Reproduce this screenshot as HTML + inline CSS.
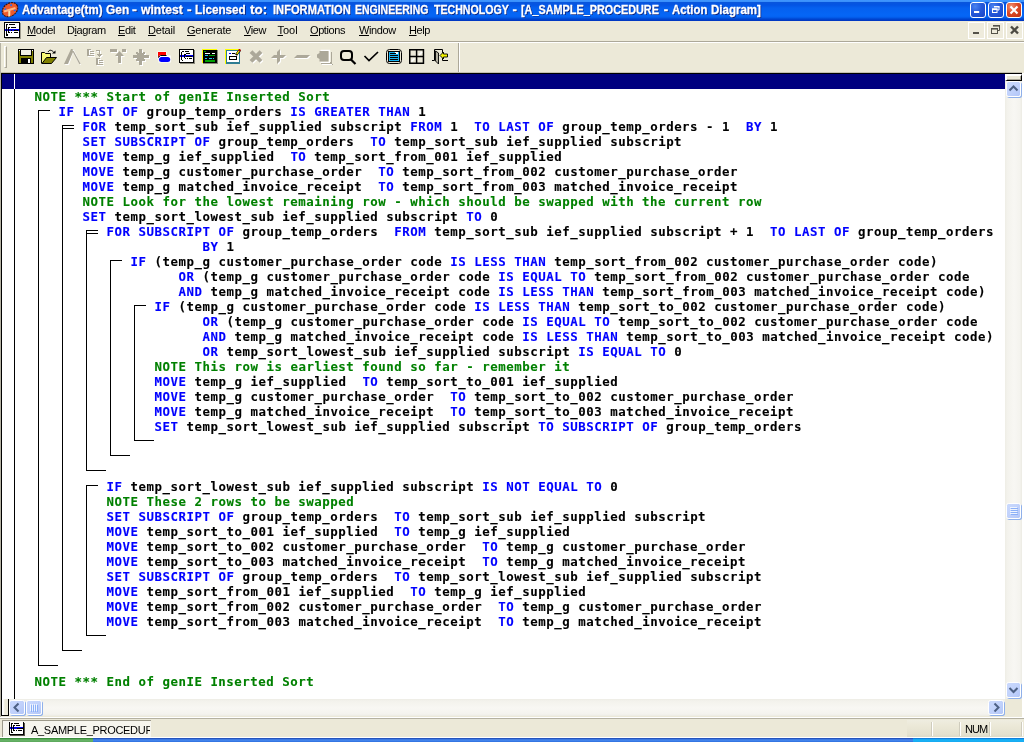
<!DOCTYPE html>
<html lang="en">
<head>
<meta charset="utf-8">
<title>Advantage(tm) Gen - wintest - Action Diagram</title>
<style>
html,body{margin:0;padding:0;}
body{width:1024px;height:742px;overflow:hidden;background:#ece9d8;}
#app{will-change:transform;position:relative;width:1024px;height:742px;overflow:hidden;background:#ece9d8;font-family:"Liberation Sans",sans-serif;font-size:11px;color:#000;}
#app div,#app i,#app span,#app svg{box-sizing:border-box;}
.abs{position:absolute;}

/* ---------- title bar ---------- */
#title{position:absolute;left:0;top:0;width:1024px;height:21px;
 background:linear-gradient(to bottom,#3f96ff 0px,#3a90fb 1.5px,#0855dd 2.5px,#0354e4 5px,#0560ef 8px,#0566f6 15px,#0462f1 17px,#0047d2 19px,#0034be 21px);}
#title .ttl{position:absolute;left:0;top:1px;height:17px;width:800px;line-height:17px;font-weight:bold;font-size:13px;color:#fff;white-space:pre;text-shadow:1px 1px 0 #0a1f7a;}
#title .tw{position:absolute;top:0;left:0;display:block;transform-origin:0 0;white-space:pre;-webkit-text-stroke:0.3px #fff;}
.tbtn{position:absolute;top:2px;width:16px;height:16px;border:1px solid #fff;border-radius:3px;
 background:radial-gradient(circle at 30% 25%,#4a83f0 0%,#2458da 45%,#1a45c4 100%);}
.tbtn.close{background:radial-gradient(circle at 30% 25%,#f09070 0%,#dd4a26 45%,#bf3010 100%);}

/* ---------- menu bar ---------- */
#menu{position:absolute;left:0;top:21px;width:1024px;height:20px;background:#ece9d8;}
#menu .mi{position:absolute;top:2px;height:14px;line-height:14px;font-size:11px;white-space:pre;color:#000;letter-spacing:-0.4px;}
#menu .mi u{text-decoration:underline;text-underline-offset:1px;}
#menuline1{position:absolute;left:0;top:41px;width:1024px;height:1px;background:#aca899;}
#menuline2{position:absolute;left:0;top:42px;width:1024px;height:1px;background:#fff;}
.mdib{position:absolute;top:22px;width:17px;height:17px;background:#eeebdc;border:1px solid #fff;}
.mdib svg{display:block;margin-top:-1px;}

/* ---------- toolbar ---------- */
#toolbar{position:absolute;left:0;top:43px;width:1024px;height:30px;background:#ece9d8;}
.tb{position:absolute;top:49px;width:16px;height:16px;}

/* ---------- editor ---------- */
#editor{position:absolute;left:0;top:0;width:1024px;height:742px;pointer-events:none;}
#edbg{position:absolute;left:2px;top:74px;width:1003px;height:625px;background:#fff;}
#selbar{position:absolute;left:2px;top:74px;width:1003px;height:15px;background:#000080;}
.ln{position:absolute;height:15px;line-height:15px;white-space:pre;font-family:"DejaVu Sans Mono", "Liberation Mono", monospace;font-size:12.4px;letter-spacing:0.5347px;font-weight:bold;color:#000;-webkit-text-stroke:0.12px;}
.ln .k{color:#0000ff;}
.ln .g{color:#008000;}
i.h{position:absolute;height:1px;background:#000;display:block;}
i.v{position:absolute;width:1px;background:#000;display:block;}

/* ---------- scrollbars ---------- */
.sbtn{position:absolute;border:1px solid #fff;border-radius:2.5px;background:linear-gradient(135deg,#cad9fd 0%,#c0d1fb 55%,#b2c6f8 100%);box-shadow:1px 1px 0 #8fb0ea;}

/* ---------- status bar ---------- */
#status{position:absolute;left:0;top:719px;width:1024px;height:19px;background:#ece9d8;}
.vtrack{background:linear-gradient(to right,#eeede5 0,#f3f2ec 2px,#f8f7f3 9px,#f4f3ee 15px,#ecebe3 17px);}
.htrack{background:linear-gradient(to bottom,#eeede5 0,#f3f2ec 2px,#f8f7f3 9px,#f4f3ee 15px,#ecebe3 17px);}
.sbtn svg{display:block;}
.st{font-size:11px;line-height:14px;height:14px;white-space:pre;color:#000;letter-spacing:-0.4px;}
i.sep{position:absolute;top:3px;width:2px;height:14px;display:block;background:linear-gradient(to right,#cfccbd 0,#cfccbd 1px,#fff 1px,#fff 2px);}

</style>
</head>
<body>
<div id="app">
<div id="title">
<svg class="abs" style="left:1px;top:1px" width="18" height="18" viewBox="0 0 18 18">
<g transform="rotate(-35 9 8.7)">
<ellipse cx="9" cy="8.7" rx="8.4" ry="6.3" fill="#ee5a2c" stroke="#3a1206" stroke-width="1.1" stroke-dasharray="2 0.8"/>
<circle cx="5.5" cy="5.7" r="1" fill="#2a6cf0"/><circle cx="12.5" cy="5.6" r="1" fill="#2a6cf0"/><circle cx="5.5" cy="11.8" r="1" fill="#2a6cf0"/><circle cx="12.5" cy="11.8" r="1" fill="#2a6cf0"/>
</g>
<path d="M3 10.5L14.5 7M8.3 8.5V15.5" stroke="#ffb884" stroke-width="2.2" fill="none"/>
<path d="M8.3 10V15" stroke="#ffe9a8" stroke-width="1.2"/>
</svg>
<div class="ttl"><span class="tw" style="left:22.0px;transform:scaleX(0.8846)">Advantage(tm) </span><span class="tw" style="left:105.58px;transform:scaleX(0.9167)">Gen </span><span class="tw" style="left:132.3px;transform:scaleX(1.125)">- </span><span class="tw" style="left:141.0px;transform:scaleX(0.9333)">wintest </span><span class="tw" style="left:187.3px;transform:scaleX(1.0625)">- </span><span class="tw" style="left:195.1px;transform:scaleX(0.9)">Licensed </span><span class="tw" style="left:249.75px;transform:scaleX(1.0333)">to:  </span><span class="tw" style="left:273.14px;transform:scaleX(0.8567)">INFORMATION </span><span class="tw" style="left:355.19px;transform:scaleX(0.8062)">ENGINEERING </span><span class="tw" style="left:433.5px;transform:scaleX(0.8159)">TECHNOLOGY </span><span class="tw" style="left:512.5px;transform:scaleX(1.0)">- </span><span class="tw" style="left:520.67px;transform:scaleX(0.8338)">[A_SAMPLE_PROCEDURE </span><span class="tw" style="left:663.75px;transform:scaleX(1.0)">- </span><span class="tw" style="left:671.5px;transform:scaleX(0.875)">Action </span><span class="tw" style="left:711.11px;transform:scaleX(0.8864)">Diagram]</span></div>
<div class="tbtn" style="left:970px"><svg width="14" height="14" viewBox="0 0 14 14"><rect x="3" y="8" width="5.2" height="2" fill="#fff"/></svg></div>
<div class="tbtn" style="left:988px"><svg width="14" height="14" viewBox="0 0 14 14"><path d="M5.5 3.5h4.5v3.5h-1.5" fill="none" stroke="#fff" stroke-width="1"/><rect x="5" y="3" width="5.5" height="1.5" fill="#fff"/><rect x="3.5" y="6" width="4.5" height="3.5" fill="none" stroke="#fff"/><rect x="3" y="5.5" width="5.5" height="1.5" fill="#fff"/></svg></div>
<div class="tbtn close" style="left:1006px"><svg width="14" height="14" viewBox="0 0 14 14"><path d="M3.5 3.5L10.5 10.5M10.5 3.5L3.5 10.5" stroke="#fff" stroke-width="2.1" fill="none"/></svg></div>
</div>

<div id="menu">
<svg class="abs" style="left:4px;top:1px" width="17" height="17" viewBox="0 0 17 17" shape-rendering="crispEdges">
<rect x="1" y="1" width="16" height="16" fill="#a09d8f"/>
<rect x="0" y="0" width="16" height="16" fill="#000"/>
<rect x="1" y="1" width="14" height="14" fill="#fff"/>
<rect x="1" y="7" width="14" height="2" fill="#0000e8"/>
<rect x="2" y="2" width="1" height="12" fill="#000"/><rect x="2" y="2" width="2" height="1" fill="#000"/><rect x="2" y="12" width="2" height="2" fill="#000"/>
<rect x="4" y="5" width="1" height="6" fill="#000"/><rect x="4" y="5" width="2" height="1" fill="#000"/><rect x="4" y="10" width="2" height="1" fill="#000"/>
<rect x="5" y="2" width="6" height="1" fill="#000"/><rect x="7" y="5" width="5" height="1" fill="#000"/>
<rect x="7" y="8" width="1" height="1" fill="#000"/><rect x="10" y="8" width="4" height="1" fill="#000"/>
<rect x="7" y="10" width="1" height="1" fill="#000"/><rect x="10" y="10" width="4" height="1" fill="#000"/>
</svg>
<div class="mi" style="left:27px"><u>M</u>odel</div>
<div class="mi" style="left:67px">D<u>i</u>agram</div>
<div class="mi" style="left:118px"><u>E</u>dit</div>
<div class="mi" style="left:148px;letter-spacing:-0.2px"><u>D</u>etail</div>
<div class="mi" style="left:187px;letter-spacing:-0.2px"><u>G</u>enerate</div>
<div class="mi" style="left:244px"><u>V</u>iew</div>
<div class="mi" style="left:277.5px;letter-spacing:0px"><u>T</u>ool</div>
<div class="mi" style="left:310px"><u>O</u>ptions</div>
<div class="mi" style="left:359px"><u>W</u>indow</div>
<div class="mi" style="left:409px"><u>H</u>elp</div>
</div>
<div class="mdib" style="left:968px"><svg width="15" height="15" viewBox="0 0 15 15"><rect x="4" y="10" width="6" height="2" fill="#55534a"/></svg></div>
<div class="mdib" style="left:987px"><svg width="15" height="15" viewBox="0 0 15 15"><path d="M5.5 3.5h6v5h-2" fill="none" stroke="#55534a"/><rect x="5" y="3" width="7" height="1.6" fill="#55534a"/><rect x="3.5" y="6.5" width="6" height="5" fill="none" stroke="#55534a"/><rect x="3" y="6" width="7" height="1.6" fill="#55534a"/></svg></div>
<div class="mdib" style="left:1006px"><svg width="15" height="15" viewBox="0 0 15 15"><path d="M4 4.5L11 11.5M11 4.5L4 11.5" stroke="#4c4a42" stroke-width="2.4" fill="none"/></svg></div>
<div id="menuline1"></div><div id="menuline2"></div>

<div id="toolbar">
<div class="abs" style="left:4px;top:3px;width:3px;height:22px;border-left:1px solid #fff;border-top:1px solid #fff;border-right:1px solid #aca899;border-bottom:1px solid #aca899"></div>
<div class="abs" style="left:458px;top:0px;width:1px;height:29px;background:#aca899"></div>
<div class="abs" style="left:459px;top:0px;width:1px;height:29px;background:#fff"></div>
</div>
<!-- 1 save -->
<svg class="tb" style="left:18px" viewBox="0 0 16 16" shape-rendering="crispEdges">
<rect x="0" y="0" width="16" height="15" fill="#000"/>
<rect x="1" y="1" width="14" height="13" fill="#808000"/>
<rect x="2" y="1" width="12" height="6" fill="#000"/>
<rect x="3" y="1" width="10" height="5" fill="#f1efe3"/>
<rect x="1" y="1" width="1" height="1" fill="#fff"/><rect x="14" y="1" width="1" height="1" fill="#fff"/>
<rect x="3" y="9" width="10" height="5" fill="#000"/>
<rect x="10" y="10" width="2" height="4" fill="#fff"/>
</svg>
<!-- 2 open -->
<svg class="tb" style="left:41px" viewBox="0 0 16 16">
<path d="M0.5 14.5V3.5H3.5L4.5 4.5H9.5V9" fill="#ffff66" stroke="#000"/>
<path d="M1 5H9V9H5L1 14Z" fill="#f8f878"/>
<path d="M1 14.5L5.5 8.5H15.5L10.5 14.5Z" fill="#808000" stroke="#000"/>
<path d="M7 3C8.5 0.5 10.5 0.5 13.5 4" fill="none" stroke="#000"/>
<path d="M11 4.5H14.5V1.5Z" fill="#000"/>
</svg>
<!-- 3 caret (disabled) -->
<svg class="tb" style="left:64px;width:18px" viewBox="0 0 18 16">
<path d="M1 16L5 16L9 4L16 16L17 16L10 1L8 1Z" fill="#fff"/>
<path d="M0 15L4 15L9 3L8.6 0L7 0Z" fill="#aca899"/>
<path d="M9 2L16 15" stroke="#aca899" stroke-width="1.3" fill="none"/>
</svg>
<!-- 4 tree (disabled) -->
<svg class="tb" style="left:87px;width:17px;height:17px" viewBox="0 0 17 17" shape-rendering="crispEdges">
<g fill="#fff" transform="translate(1,1)"><rect x="0" y="0" width="2" height="7"/><rect x="0" y="0" width="4" height="1"/><rect x="0" y="6" width="7" height="1"/><rect x="3" y="2" width="4" height="1"/><rect x="3" y="4" width="4" height="1"/><rect x="9" y="1" width="4" height="1"/><rect x="12" y="1" width="1" height="5"/><rect x="10" y="5" width="5" height="1"/><rect x="11" y="6" width="3" height="1"/><rect x="12" y="7" width="1" height="1"/><rect x="9" y="9" width="2" height="7"/><rect x="9" y="9" width="4" height="1"/><rect x="9" y="15" width="7" height="1"/><rect x="12" y="11" width="4" height="1"/><rect x="12" y="13" width="4" height="1"/></g>
<g fill="#aca899"><rect x="0" y="0" width="2" height="7"/><rect x="0" y="0" width="4" height="1"/><rect x="0" y="6" width="7" height="1"/><rect x="3" y="2" width="4" height="1"/><rect x="3" y="4" width="4" height="1"/><rect x="9" y="1" width="4" height="1"/><rect x="12" y="1" width="1" height="5"/><rect x="10" y="5" width="5" height="1"/><rect x="11" y="6" width="3" height="1"/><rect x="12" y="7" width="1" height="1"/><rect x="9" y="9" width="2" height="7"/><rect x="9" y="9" width="4" height="1"/><rect x="9" y="15" width="7" height="1"/><rect x="12" y="11" width="4" height="1"/><rect x="12" y="13" width="4" height="1"/></g>
</svg>
<!-- 5 up arrow (disabled) -->
<svg class="tb" style="left:110px;width:17px;height:17px" viewBox="0 0 17 17">
<g fill="#fff" transform="translate(1,1)"><rect x="0" y="0" width="7" height="3"/><rect x="12" y="0" width="4" height="3"/><path d="M9.5 2L14 7H11V14H8V7H5Z"/></g>
<g fill="#aca899"><rect x="0" y="0" width="7" height="3"/><rect x="12" y="0" width="4" height="3"/><path d="M9.5 2L14 7H11V14H8V7H5Z"/></g>
</svg>
<!-- 6 star (disabled) -->
<svg class="tb" style="left:133px;width:17px;height:17px" viewBox="0 0 17 17">
<g fill="#fff" transform="translate(1,1)"><rect x="6" y="0" width="3" height="16"/><rect x="0" y="6" width="16" height="3"/><rect x="4" y="4" width="7" height="8"/><rect x="3" y="3" width="2" height="2"/><rect x="10" y="3" width="2" height="2"/><rect x="3" y="10" width="2" height="2"/><rect x="10" y="10" width="2" height="2"/></g>
<g fill="#aca899"><rect x="6" y="0" width="3" height="16"/><rect x="0" y="6" width="16" height="3"/><rect x="4" y="4" width="7" height="8"/><rect x="3" y="3" width="2" height="2"/><rect x="10" y="3" width="2" height="2"/><rect x="3" y="10" width="2" height="2"/><rect x="10" y="10" width="2" height="2"/></g>
</svg>
<!-- 7 red/blue shapes -->
<svg class="tb" style="left:156px" viewBox="0 0 16 16">
<path d="M1.5 2.5H10.5V6.5H14.8V13.5H2.5V9.5H1.5Z" fill="#fff"/>
<path d="M2 3H10V6H4L2 8.5Z" fill="#ff0000"/>
<path d="M2 8.5L4.5 6.5H10.5" stroke="#000" fill="none"/>
<rect x="3" y="8" width="11.2" height="5" rx="2.5" ry="2.5" fill="#0000ff"/>
</svg>
<!-- 8 diagram -->
<svg class="tb" style="left:179px" viewBox="0 0 16 16" shape-rendering="crispEdges">
<rect x="1" y="1" width="15" height="14" fill="#8a887c"/>
<rect x="0" y="0" width="15" height="14" fill="#000"/>
<rect x="1" y="1" width="13" height="12" fill="#fff"/>
<rect x="1" y="6" width="13" height="2" fill="#0000e8"/>
<path d="M3 2.5H5M6 2.5H10M7 4.5H11M2.5 3V11M2.5 11.5H4M5.5 5V9M5.5 5.5H7M5.5 9.5H7M8 9.5H9M10 9.5H13M7 7.5H13" stroke="#000" fill="none"/>
</svg>
<!-- 9 dark screen -->
<svg class="tb" style="left:202px" viewBox="0 0 16 16" shape-rendering="crispEdges">
<rect x="1" y="1" width="15" height="14" fill="#8a887c"/>
<rect x="0" y="0" width="15" height="14" fill="#ffff00"/>
<rect x="1" y="1" width="14" height="13" fill="#000"/>
<rect x="2" y="2" width="2" height="1" fill="#00a000"/>
<rect x="3" y="4" width="5" height="1" fill="#fff"/><rect x="10" y="4" width="3" height="1" fill="#fff"/>
<rect x="3" y="6" width="3" height="1" fill="#20c0f0"/><rect x="7" y="6" width="6" height="1" fill="#00a000"/>
<rect x="3" y="9" width="2" height="1" fill="#20c0f0"/><rect x="7" y="9" width="3" height="1" fill="#20c0f0"/><rect x="11" y="9" width="1" height="1" fill="#20c0f0"/>
<rect x="3" y="11" width="10" height="2" fill="#00a000"/>
</svg>
<!-- 10 yellow form -->
<svg class="tb" style="left:225px" viewBox="0 0 16 16">
<g shape-rendering="crispEdges">
<rect x="0" y="0" width="15" height="15" fill="#ffff00"/>
<rect x="1" y="1" width="14" height="14" fill="#2e7d92"/>
<rect x="2" y="2" width="12" height="11" fill="#fff"/>
<rect x="4" y="4" width="2" height="1" fill="#0000ff"/><rect x="7" y="4" width="3" height="1" fill="#000"/>
<rect x="4.5" y="7.5" width="7" height="3" fill="#fff" stroke="#000"/>
</g>
<path d="M15 1L11 6" stroke="#000" stroke-width="2.6"/><path d="M14.6 1.4L11.6 5.2" stroke="#ffff00" stroke-width="1.2"/><path d="M15.3 0.4L14 2" stroke="#c00000" stroke-width="2"/>
</svg>
<!-- 11 X (disabled) -->
<svg class="tb" style="left:248px;width:17px;height:17px" viewBox="0 0 17 17">
<path d="M4 3.6L14 13.4M14 3.6L4 13.4" stroke="#fff" stroke-width="4" fill="none"/>
<path d="M3 2.6L13 12.4M13 2.6L3 12.4" stroke="#aca899" stroke-width="4" fill="none"/>
</svg>
<!-- 12 plus (disabled) -->
<svg class="tb" style="left:271px;width:17px;height:17px" viewBox="0 0 17 17">
<g fill="#fff" transform="translate(1,1)"><path d="M0 9L3 6H15L12 9Z"/><path d="M6 15V3L9 0V12Z"/></g>
<g fill="#aca899"><path d="M0 9L3 6H15L12 9Z"/><path d="M6 15V3L9 0V12Z"/></g>
</svg>
<!-- 13 minus (disabled) -->
<svg class="tb" style="left:294px;width:18px;height:17px" viewBox="0 0 18 17">
<path d="M1 10L4 7H17L14 10Z" fill="#fff"/>
<path d="M0 9L3 6H16L13 9Z" fill="#aca899"/>
</svg>
<!-- 14 copy (disabled) -->
<svg class="tb" style="left:317px;width:17px;height:17px" viewBox="0 0 17 17">
<path d="M3.5 1.5H12.5V13.5H3.5" fill="none" stroke="#fff" stroke-width="1.4"/>
<path d="M4 14.5H14.5V3" fill="none" stroke="#aca899"/><path d="M13 13L16 16" stroke="#aca899"/><path d="M5 15.5H15" stroke="#fff"/>
<path d="M2.5 2H11.5V12.5H2.5V10L0 8.5V5.5L2.5 4Z" fill="#aca899"/>
</svg>
<!-- 15 magnifier -->
<svg class="tb" style="left:340px;width:17px;height:17px" viewBox="0 0 17 17">
<rect x="1" y="2" width="11" height="9" rx="3" ry="3" fill="none" stroke="#000" stroke-width="2"/>
<path d="M10.5 10L15.5 15" stroke="#000" stroke-width="2.2"/>
</svg>
<!-- 16 check -->
<svg class="tb" style="left:363px" viewBox="0 0 16 16">
<path d="M1.5 7L6 11.5L15 3" stroke="#000" stroke-width="1.7" fill="none"/>
</svg>
<!-- 17 blue list -->
<svg class="tb" style="left:386px" viewBox="0 0 16 16">
<rect x="0.5" y="0.5" width="15" height="14" rx="3" ry="3" fill="#ece9d8" stroke="#000"/>
<g shape-rendering="crispEdges">
<rect x="2" y="2" width="12" height="11" fill="#000"/>
<rect x="3" y="3" width="10" height="9" fill="#1ab4f2"/>
<rect x="4" y="4" width="8" height="1" fill="#000"/><rect x="4" y="6" width="8" height="1" fill="#000"/><rect x="4" y="8" width="8" height="1" fill="#000"/><rect x="4" y="10" width="8" height="1" fill="#000"/>
<rect x="9" y="3" width="3" height="1" fill="#fff"/><rect x="10" y="4" width="2" height="1" fill="#fff"/>
</g>
</svg>
<!-- 18 grid -->
<svg class="tb" style="left:409px" viewBox="0 0 16 16">
<rect x="0.75" y="0.75" width="13.7" height="13.5" fill="#ece9d8" stroke="#000" stroke-width="1.5"/>
<path d="M7.6 0.5V14.5M0.5 7.5H14.5" stroke="#000" stroke-width="1.5"/>
<path d="M10 6L13 3" stroke="#fff" stroke-width="1.6"/><path d="M2.5 12.5L5.5 9.5" stroke="#fff" stroke-width="1.6"/>
</svg>
<!-- 19 exit door -->
<svg class="tb" style="left:432px;width:17px" viewBox="0 0 17 16">
<path d="M0 11.5H2.5V0.5H10.5V4" fill="none" stroke="#000"/>
<path d="M3.5 2L6.5 4V15L3.5 12Z" fill="#b4b1a2" stroke="#000" stroke-width="0.9"/>
<path d="M10.5 9V11.5H16" fill="none" stroke="#000"/>
<path d="M8 6.5L11.5 3V5H15.5V8H11.5V10Z" fill="#f4f400" stroke="#000" stroke-width="0.9"/>
</svg>

<div id="editor">
<div id="edbg"></div>
<i class="h" style="left:0;top:72px;width:1022px;background:#c4c1b1"></i>
<i class="v" style="left:0;top:43px;height:674px;background:#b5b2a3"></i>
<i class="v" style="left:1022px;top:73px;height:645px;width:2px;background:#fff"></i>
<div id="selbar"></div>
<i class="h" style="left:1px;top:73px;width:1021px"></i>
<i class="v" style="left:1px;top:73px;height:643px"></i>
<i class="v" style="left:14px;top:89px;height:610px"></i>
<i class="v" style="left:14px;top:74px;height:15px;background:#fff"></i>
<i class="h" style="left:38px;top:110px;width:12px"></i>
<i class="v" style="left:38px;top:110px;height:556px"></i>
<i class="h" style="left:38px;top:665px;width:20px"></i>
<i class="h" style="left:62px;top:125px;width:12px"></i>
<i class="h" style="left:62px;top:128px;width:12px"></i>
<i class="v" style="left:62px;top:125px;height:526px"></i>
<i class="h" style="left:62px;top:650px;width:20px"></i>
<i class="h" style="left:86px;top:230px;width:12px"></i>
<i class="h" style="left:86px;top:233px;width:12px"></i>
<i class="v" style="left:86px;top:230px;height:241px"></i>
<i class="h" style="left:86px;top:470px;width:20px"></i>
<i class="h" style="left:110px;top:260px;width:12px"></i>
<i class="v" style="left:110px;top:260px;height:196px"></i>
<i class="h" style="left:110px;top:455px;width:20px"></i>
<i class="h" style="left:134px;top:305px;width:12px"></i>
<i class="v" style="left:134px;top:305px;height:136px"></i>
<i class="h" style="left:134px;top:440px;width:20px"></i>
<i class="h" style="left:86px;top:485px;width:12px"></i>
<i class="v" style="left:86px;top:485px;height:151px"></i>
<i class="h" style="left:86px;top:635px;width:20px"></i>
<div class="ln" style="left:34.5px;top:89px"><span class="g">NOTE *** Start of genIE Inserted Sort</span></div>
<div class="ln" style="left:58.5px;top:104px"><span class="k">IF LAST OF </span>group_temp_orders <span class="k">IS GREATER THAN </span>1</div>
<div class="ln" style="left:82.5px;top:119px"><span class="k">FOR </span>temp_sort_sub ief_supplied subscript <span class="k">FROM </span>1  <span class="k">TO LAST OF </span>group_temp_orders - 1  <span class="k">BY </span>1</div>
<div class="ln" style="left:82.5px;top:134px"><span class="k">SET SUBSCRIPT OF </span>group_temp_orders  <span class="k">TO </span>temp_sort_sub ief_supplied subscript</div>
<div class="ln" style="left:82.5px;top:149px"><span class="k">MOVE </span>temp_g ief_supplied  <span class="k">TO </span>temp_sort_from_001 ief_supplied</div>
<div class="ln" style="left:82.5px;top:164px"><span class="k">MOVE </span>temp_g customer_purchase_order  <span class="k">TO </span>temp_sort_from_002 customer_purchase_order</div>
<div class="ln" style="left:82.5px;top:179px"><span class="k">MOVE </span>temp_g matched_invoice_receipt  <span class="k">TO </span>temp_sort_from_003 matched_invoice_receipt</div>
<div class="ln" style="left:82.5px;top:194px"><span class="g">NOTE Look for the lowest remaining row - which should be swapped with the current row</span></div>
<div class="ln" style="left:82.5px;top:209px"><span class="k">SET </span>temp_sort_lowest_sub ief_supplied subscript <span class="k">TO </span>0</div>
<div class="ln" style="left:106.5px;top:224px"><span class="k">FOR SUBSCRIPT OF </span>group_temp_orders  <span class="k">FROM </span>temp_sort_sub ief_supplied subscript + 1  <span class="k">TO LAST OF </span>group_temp_orders</div>
<div class="ln" style="left:202.5px;top:239px"><span class="k">BY </span>1</div>
<div class="ln" style="left:130.5px;top:254px"><span class="k">IF </span>(temp_g customer_purchase_order code <span class="k">IS LESS THAN </span>temp_sort_from_002 customer_purchase_order code)</div>
<div class="ln" style="left:178.5px;top:269px"><span class="k">OR </span>(temp_g customer_purchase_order code <span class="k">IS EQUAL TO </span>temp_sort_from_002 customer_purchase_order code</div>
<div class="ln" style="left:178.5px;top:284px"><span class="k">AND </span>temp_g matched_invoice_receipt code <span class="k">IS LESS THAN </span>temp_sort_from_003 matched_invoice_receipt code)</div>
<div class="ln" style="left:154.5px;top:299px"><span class="k">IF </span>(temp_g customer_purchase_order code <span class="k">IS LESS THAN </span>temp_sort_to_002 customer_purchase_order code)</div>
<div class="ln" style="left:202.5px;top:314px"><span class="k">OR </span>(temp_g customer_purchase_order code <span class="k">IS EQUAL TO </span>temp_sort_to_002 customer_purchase_order code</div>
<div class="ln" style="left:202.5px;top:329px"><span class="k">AND </span>temp_g matched_invoice_receipt code <span class="k">IS LESS THAN </span>temp_sort_to_003 matched_invoice_receipt code)</div>
<div class="ln" style="left:202.5px;top:344px"><span class="k">OR </span>temp_sort_lowest_sub ief_supplied subscript <span class="k">IS EQUAL TO </span>0</div>
<div class="ln" style="left:154.5px;top:359px"><span class="g">NOTE This row is earliest found so far - remember it</span></div>
<div class="ln" style="left:154.5px;top:374px"><span class="k">MOVE </span>temp_g ief_supplied  <span class="k">TO </span>temp_sort_to_001 ief_supplied</div>
<div class="ln" style="left:154.5px;top:389px"><span class="k">MOVE </span>temp_g customer_purchase_order  <span class="k">TO </span>temp_sort_to_002 customer_purchase_order</div>
<div class="ln" style="left:154.5px;top:404px"><span class="k">MOVE </span>temp_g matched_invoice_receipt  <span class="k">TO </span>temp_sort_to_003 matched_invoice_receipt</div>
<div class="ln" style="left:154.5px;top:419px"><span class="k">SET </span>temp_sort_lowest_sub ief_supplied subscript <span class="k">TO SUBSCRIPT OF </span>group_temp_orders</div>
<div class="ln" style="left:106.5px;top:479px"><span class="k">IF </span>temp_sort_lowest_sub ief_supplied subscript <span class="k">IS NOT EQUAL TO </span>0</div>
<div class="ln" style="left:106.5px;top:494px"><span class="g">NOTE These 2 rows to be swapped</span></div>
<div class="ln" style="left:106.5px;top:509px"><span class="k">SET SUBSCRIPT OF </span>group_temp_orders  <span class="k">TO </span>temp_sort_sub ief_supplied subscript</div>
<div class="ln" style="left:106.5px;top:524px"><span class="k">MOVE </span>temp_sort_to_001 ief_supplied  <span class="k">TO </span>temp_g ief_supplied</div>
<div class="ln" style="left:106.5px;top:539px"><span class="k">MOVE </span>temp_sort_to_002 customer_purchase_order  <span class="k">TO </span>temp_g customer_purchase_order</div>
<div class="ln" style="left:106.5px;top:554px"><span class="k">MOVE </span>temp_sort_to_003 matched_invoice_receipt  <span class="k">TO </span>temp_g matched_invoice_receipt</div>
<div class="ln" style="left:106.5px;top:569px"><span class="k">SET SUBSCRIPT OF </span>group_temp_orders  <span class="k">TO </span>temp_sort_lowest_sub ief_supplied subscript</div>
<div class="ln" style="left:106.5px;top:584px"><span class="k">MOVE </span>temp_sort_from_001 ief_supplied  <span class="k">TO </span>temp_g ief_supplied</div>
<div class="ln" style="left:106.5px;top:599px"><span class="k">MOVE </span>temp_sort_from_002 customer_purchase_order  <span class="k">TO </span>temp_g customer_purchase_order</div>
<div class="ln" style="left:106.5px;top:614px"><span class="k">MOVE </span>temp_sort_from_003 matched_invoice_receipt  <span class="k">TO </span>temp_g matched_invoice_receipt</div>
<div class="ln" style="left:34.5px;top:674px"><span class="g">NOTE *** End of genIE Inserted Sort</span></div>
</div>
<!-- top-right splitter box -->
<div class="abs" style="left:1005px;top:74px;width:17px;height:7px;background:#ece9d8;border-left:2px solid #fff;border-top:2px solid #fff;border-right:1px solid #000;border-bottom:1px solid #000"></div><i class="h" style="left:1007px;top:79px;width:14px;background:#aca899"></i><i class="v" style="left:1020px;top:76px;height:4px;background:#aca899"></i>
<!-- vertical scrollbar -->
<div class="abs vtrack" style="left:1005px;top:81px;width:17px;height:618px"></div>
<div class="sbtn" style="left:1006px;top:81px;width:15px;height:16px"><svg width="13" height="14" viewBox="0 0 13 14"><path d="M2.5 8.5L6.5 4.5L10.5 8.5" fill="none" stroke="#4d6185" stroke-width="2"/></svg></div>
<div class="sbtn" style="left:1006px;top:503px;width:15px;height:16px"><svg width="13" height="14" viewBox="0 0 13 14"><path d="M3 3.5h7M3 5.5h7M3 7.5h7M3 9.5h7" stroke="#eef4fe" stroke-width="1"/><path d="M4 4.5h7M4 6.5h7M4 8.5h7M4 10.5h7" stroke="#8cb0f8" stroke-width="1"/></svg></div>
<div class="sbtn" style="left:1006px;top:682px;width:15px;height:16px"><svg width="13" height="14" viewBox="0 0 13 14"><path d="M2.5 5L6.5 9L10.5 5" fill="none" stroke="#4d6185" stroke-width="2"/></svg></div>
<!-- bottom-left splitter box -->
<div class="abs" style="left:2px;top:699px;width:7px;height:17px;background:linear-gradient(to right,#fff 0,#fff 1px,#ece9d8 3px);border-right:1px solid #000;border-bottom:1px solid #000"></div>
<i class="h" style="left:1px;top:715px;width:8px"></i>
<!-- horizontal scrollbar -->
<div class="abs htrack" style="left:9px;top:699px;width:996px;height:17px"></div>
<div class="sbtn" style="left:9px;top:700px;width:16px;height:15px"><svg width="14" height="13" viewBox="0 0 14 13"><path d="M8.5 2.5L4.5 6.5L8.5 10.5" fill="none" stroke="#4d6185" stroke-width="2"/></svg></div>
<div class="sbtn" style="left:26px;top:700px;width:16px;height:15px"><svg width="14" height="13" viewBox="0 0 14 13"><path d="M3.5 3v7M5.5 3v7M7.5 3v7M9.5 3v7" stroke="#eef4fe" stroke-width="1"/><path d="M4.5 4v7M6.5 4v7M8.5 4v7M10.5 4v7" stroke="#8cb0f8" stroke-width="1"/></svg></div>
<div class="sbtn" style="left:988px;top:700px;width:16px;height:15px"><svg width="14" height="13" viewBox="0 0 14 13"><path d="M5.5 2.5L9.5 6.5L5.5 10.5" fill="none" stroke="#4d6185" stroke-width="2"/></svg></div>
<!-- corner -->
<div class="abs" style="left:1005px;top:699px;width:17px;height:17px;background:#ece9d8"></div>

<div class="abs" style="left:0;top:717px;width:1024px;height:1px;background:#fff"></div>
<div class="abs" style="left:0;top:718px;width:1024px;height:1px;background:#b4b1a2"></div>
<div id="status">
<div class="abs" style="left:2px;top:1px;width:149px;height:18px;border-left:1px solid #9d9a8b;border-top:1px solid #9d9a8b;border-bottom:1px solid #fff;background:#f6f5ee"></div>
<svg class="abs" style="left:9px;top:3px" width="16" height="14" viewBox="0 0 16 14" shape-rendering="crispEdges">
<rect x="0" y="0" width="15" height="13" fill="#000"/>
<rect x="1" y="0" width="13" height="12" fill="#fff"/>
<rect x="1" y="13" width="15" height="1" fill="#55534a"/><rect x="15" y="1" width="1" height="12" fill="#55534a"/>
<rect x="1" y="5" width="13" height="2" fill="#0000f0"/>
<rect x="2" y="1" width="1" height="10" fill="#000"/><rect x="2" y="1" width="2" height="1" fill="#000"/><rect x="2" y="10" width="2" height="1" fill="#000"/>
<rect x="4" y="3" width="1" height="6" fill="#000"/><rect x="4" y="3" width="2" height="1" fill="#000"/><rect x="4" y="8" width="2" height="1" fill="#000"/>
<rect x="5" y="1" width="5" height="1" fill="#000"/><rect x="7" y="3" width="4" height="1" fill="#000"/>
<rect x="8" y="6" width="6" height="1" fill="#000"/>
<rect x="7" y="8" width="1" height="1" fill="#000"/><rect x="9" y="8" width="4" height="1" fill="#000"/>
</svg>
<div class="abs st" style="left:31px;top:4px;width:119px;overflow:hidden;letter-spacing:-0.3px">A_SAMPLE_PROCEDURE - Action Diagram</div>
<div class="abs" style="left:907px;top:1px;width:115px;height:18px;background:linear-gradient(to bottom,#efede0 0,#ece9d8 30%,#e4e1cf 80%,#dbd8c5 100%)"></div>
<i class="sep" style="left:931px"></i><i class="sep" style="left:959px"></i><i class="sep" style="left:989px"></i><i class="sep" style="left:1021px"></i>
<div class="abs st" style="left:965px;top:3px;letter-spacing:-1px">NUM</div>
</div>
<!-- taskbar sliver -->
<div class="abs" style="left:0;top:737px;width:1024px;height:1px;background:#fff"></div>
<div class="abs" style="left:0;top:738px;width:1024px;height:4px;background:linear-gradient(to bottom,#1941a5 0,#3168d5 1px,#4a8aef 2px,#2d6fdf 4px)"></div>
<div class="abs" style="left:0;top:738px;width:93px;height:4px;background:linear-gradient(to bottom,#2b7a2b 0,#4d9f4d 1px,#6ab56a 2px,#5aa85a 4px)"></div>
<div class="abs" style="left:913px;top:738px;width:111px;height:4px;background:linear-gradient(to bottom,#0d5fc8 0,#14a0ee 1px,#19b4f6 2px,#18a8f0 4px)"></div>

</div>
</body>
</html>
